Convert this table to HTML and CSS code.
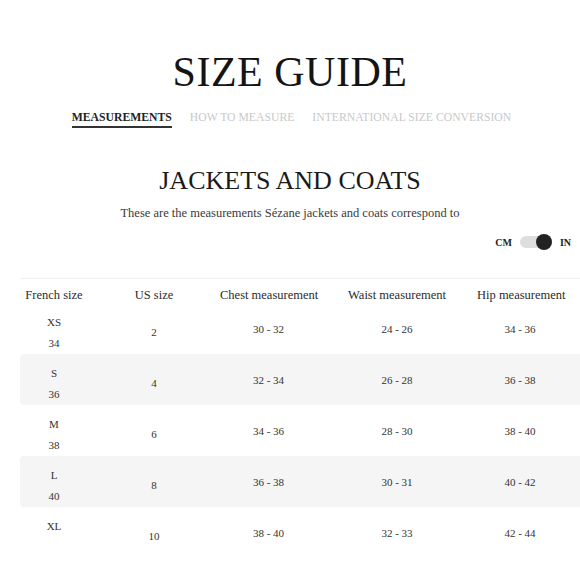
FILE: index.html
```html
<!DOCTYPE html>
<html lang="en">
<head>
    <meta charset="UTF-8">
    <title>Size guide</title>
    <meta name="viewport" content="width=device-width, initial-scale=1.0">
    <link rel="stylesheet" href="styles.css">
</head>
<body>
    <div class="guide">
        <h1 class="guide-title">SIZE GUIDE</h1>

        <nav class="tabs">
            <span class="tab active">MEASUREMENTS</span>
            <span class="tab">HOW TO MEASURE</span>
            <span class="tab">INTERNATIONAL SIZE CONVERSION</span>
        </nav>

        <h2 class="section-title">JACKETS AND COATS</h2>
        <p class="section-intro">These are the measurements Sézane jackets and coats correspond to</p>

        <div class="units">
            <span class="unit">CM</span>
            <span class="switch"><span class="knob"></span></span>
            <span class="unit">IN</span>
        </div>

        <div class="size-table">
            <!-- ligne défilée sous l'en-tête -->
            <div class="peek">
                <div class="row">
                    <div class="cell"></div>
                    <div class="cell"></div>
                    <div class="cell">40 - 42</div>
                    <div class="cell">34 - 35</div>
                    <div class="cell">44 - 46</div>
                </div>
            </div>

            <div class="row head">
                <div class="cell">French size</div>
                <div class="cell">US size</div>
                <div class="cell">Chest measurement</div>
                <div class="cell">Waist measurement</div>
                <div class="cell">Hip measurement</div>
            </div>

            <div class="row">
                <div class="cell fr"><span>XS</span><span>34</span></div>
                <div class="cell us">2</div>
                <div class="cell">30 - 32</div>
                <div class="cell">24 - 26</div>
                <div class="cell">34 - 36</div>
            </div>
            <div class="row alt">
                <div class="cell fr"><span>S</span><span>36</span></div>
                <div class="cell us">4</div>
                <div class="cell">32 - 34</div>
                <div class="cell">26 - 28</div>
                <div class="cell">36 - 38</div>
            </div>
            <div class="row">
                <div class="cell fr"><span>M</span><span>38</span></div>
                <div class="cell us">6</div>
                <div class="cell">34 - 36</div>
                <div class="cell">28 - 30</div>
                <div class="cell">38 - 40</div>
            </div>
            <div class="row alt">
                <div class="cell fr"><span>L</span><span>40</span></div>
                <div class="cell us">8</div>
                <div class="cell">36 - 38</div>
                <div class="cell">30 - 31</div>
                <div class="cell">40 - 42</div>
            </div>
            <div class="row">
                <div class="cell fr"><span>XL</span><span>&nbsp;</span></div>
                <div class="cell us">10</div>
                <div class="cell">38 - 40</div>
                <div class="cell">32 - 33</div>
                <div class="cell">42 - 44</div>
            </div>
        </div>
    </div>
</body>
</html>
```

FILE: styles.css
```css
:root {
    --text-color: #1f1f1f;
    --soft-text: #3a3a3a;
    --muted: #c9c9c9;
    --row-alt: #f5f5f5;
}

* {
    margin: 0;
    padding: 0;
    box-sizing: border-box;
    font-family: 'Liberation Serif', 'Times New Roman', serif;
}

body {
    background-color: #fff;
    color: var(--text-color);
    overflow: hidden;
}

.guide {
    display: flex;
    flex-direction: column;
    align-items: center;
    padding-top: 51px;
}

.guide-title {
    font-size: 42px;
    line-height: 42px;
    font-weight: normal;
    letter-spacing: 0.5px;
    color: #141414;
}

.tabs {
    display: flex;
    gap: 18px;
    margin-top: 18px;
    margin-left: 3px;
}

.tab {
    font-size: 11.7px;
    line-height: 14px;
    color: var(--muted);
}

.tab.active {
    font-weight: bold;
    color: #222;
    border-bottom: 2px solid #333;
    padding-bottom: 1px;
}

.section-title {
    margin-top: 39px;
    font-size: 26px;
    line-height: 28px;
    font-weight: normal;
    color: #1a1a1a;
}

.section-intro {
    margin-top: 10px;
    font-size: 12.5px;
    line-height: 16px;
    color: var(--soft-text);
}

.units {
    align-self: flex-end;
    display: flex;
    align-items: center;
    gap: 8px;
    margin-top: 15px;
    margin-right: 9px;
}

.unit {
    font-size: 10px;
    font-weight: bold;
    color: #222;
}

.switch {
    position: relative;
    width: 32px;
    height: 12px;
    border-radius: 6px;
    background-color: #dedede;
}

.switch .knob {
    position: absolute;
    right: 0;
    top: -2px;
    width: 16px;
    height: 16px;
    border-radius: 50%;
    background-color: #222;
}

.size-table {
    align-self: stretch;
    margin-top: 27px;
    padding-left: 20px;
}

.peek {
    height: 4px;
    overflow: hidden;
    display: flex;
    flex-direction: column;
    justify-content: flex-end;
    border-bottom: 1px solid #f0f0f0;
}

.peek .row {
    min-height: 0;
    align-items: end;
}

.peek .cell {
    color: #b5b5b5;
    font-size: 11px;
    line-height: 14px;
}

.row {
    display: grid;
    grid-template-columns: 68px 132px 97px 160px 86px 17px;
    align-items: center;
    min-height: 51px;
}

.row.head {
    min-height: 24px;
    align-items: end;
}

.row.alt {
    background-color: var(--row-alt);
    border-radius: 4px 0 0 4px;
}

.cell {
    text-align: center;
    white-space: nowrap;
    font-size: 11px;
    color: #333;
}

.row.head .cell {
    font-size: 12.5px;
    line-height: 16px;
    color: #2b2b2b;
}

.cell.fr {
    display: flex;
    flex-direction: column;
    align-items: center;
    align-self: start;
    padding-top: 9px;
    line-height: 21px;
}

.cell.us {
    padding-top: 7px;
}
```
